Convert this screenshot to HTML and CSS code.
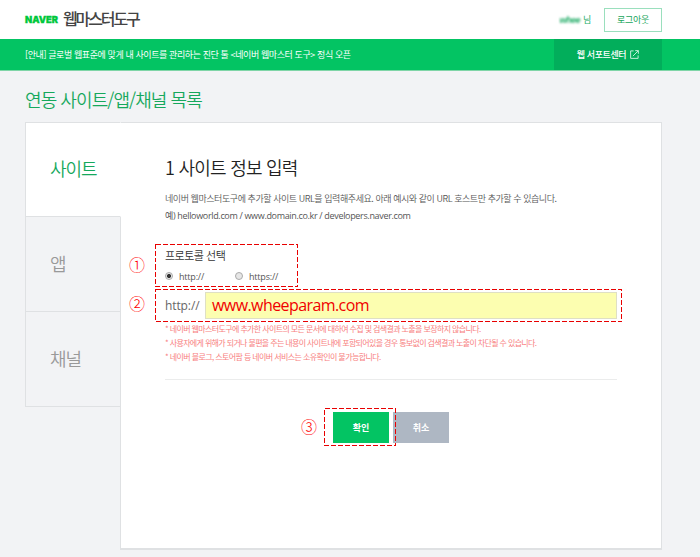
FILE: index.html
```html
<!DOCTYPE html>
<html lang="ko">
<head>
<meta charset="utf-8">
<title>네이버 웹마스터도구</title>
<link rel="stylesheet" href="styles.css">
</head>
<body>
<header class="header">
  <div class="brand"><span class="naver">NAVER</span><span class="product">웹마스터도구</span></div>
  <div class="account"><span class="user">whee</span><span class="suffix">님</span><button class="logout">로그아웃</button></div>
</header>
<div class="banner">
  <p class="notice"><span>[안내] 글로벌 웹표준에 맞게 내 사이트를 관리하는 진단 툴 &lt;네이버 웹마스터 도구&gt; 정식 오픈</span></p>
  <a class="support"><span>웹 서포트센터</span>
    <svg class="external" viewBox="0 0 10 10"><path d="M4 1H.7v8.3H9V6M5.8.7h3.5v3.5M9.2.8 3.2 6.8"/></svg>
  </a>
</div>
<main class="page">
  <h1 class="page-title"><span>연동 사이트/앱/채널 목록</span></h1>
  <div class="layout">
    <nav class="tabs">
      <a class="tab active">사이트</a>
      <a class="tab">앱</a>
      <a class="tab">채널</a>
      <div class="edge"></div>
    </nav>
    <section class="card">
      <h2 class="title"><span>1 사이트 정보 입력</span></h2>
      <p class="desc"><span class="desc-1">네이버 웹마스터도구에 추가할 사이트 URL을 입력해주세요. 아래 예시와 같이 URL 호스트만 추가할 수 있습니다.</span></p>
      <p class="desc"><span class="desc-2">예) helloworld.com / www.domain.co.kr / developers.naver.com</span></p>
      <div class="protocol">
        <h3 class="label">프로토콜 선택</h3>
        <div class="radios">
          <span class="option"><i class="radio checked"></i>http://</span>
          <span class="option"><i class="radio"></i>https://</span>
        </div>
        <svg class="outline"><rect x=".5" y=".5" width="142" height="42"/></svg>
        <span class="step">①</span>
      </div>
      <div class="url">
        <span class="scheme">http://</span>
        <div class="field">www.wheeparam.com</div>
        <svg class="outline"><rect x=".5" y=".5" width="466" height="32"/></svg>
        <span class="step">②</span>
      </div>
      <ul class="notes">
        <li><span class="note-1">* 네이버 웹마스터도구에 추가한 사이트의 모든 문서에 대하여 수집 및 검색결과 노출을 보장하지 않습니다.</span></li>
        <li><span class="note-2">* 사용자에게 위해가 되거나 불편을 주는 내용이 사이트내에 포함되어있을 경우 통보없이 검색결과 노출이 차단될 수 있습니다.</span></li>
        <li><span class="note-3">* 네이버 블로그, 스토어팜 등 네이버 서비스는 소유확인이 불가능합니다.</span></li>
      </ul>
      <div class="actions">
        <button class="btn ok">확인</button>
        <button class="btn cancel">취소</button>
        <svg class="outline"><rect x=".5" y=".5" width="71" height="37"/></svg>
        <span class="step">③</span>
      </div>
    </section>
  </div>
</main>
</body>
</html>
```
FILE: styles.css
```css
* { box-sizing: border-box; }
html, body { height: 557px; }
body {
  margin: 0;
  overflow: hidden;
  background: #f2f3f5;
  color: #333;
  font-family: "Noto Sans CJK KR", sans-serif;
  font-weight: 350;
  white-space: nowrap;
}
h1, h2, h3, p, ul { margin: 0; padding: 0; font-weight: inherit; }
li { list-style: none; }
button { padding: 0; border: 0; font: inherit; }

.header {
  display: flex;
  justify-content: space-between;
  align-items: center;
  height: 39px;
  padding: 0 38px 0 25px;
  background: #fff;
}
.brand { display: flex; align-items: center; height: 36px; }
.naver {
  width: 38px;
  color: #00c73c;
  font: 900 9.3px/35px Inter, sans-serif;
  -webkit-text-stroke: .3px #00c73c;
}
.product { color: #444; font-size: 16px; font-weight: 500; line-height: 32px; height: 36px; letter-spacing: -2.1px; }
.account { display: flex; align-items: center; height: 39px; color: #23ad68; font-size: 9px; font-weight: 400; }
.user { font: italic bold 9px "Liberation Sans", sans-serif; filter: blur(.9px); margin-right: 3px; letter-spacing: -.5px; }
.suffix { width: 21px; }
.logout {
  width: 58px;
  height: 24px;
  border: 1px solid #9adfbd;
  background: #fff;
  color: #18a65c;
  letter-spacing: -.3px;
}

.banner {
  display: flex;
  justify-content: space-between;
  height: 32px;
  padding: 0 38px 0 25px;
  background: #03c463;
  border-bottom: 1px solid #7fd5a7;
  color: #fff;
  font-size: 9px;
  font-weight: 400;
  line-height: 31px;
}
.notice { letter-spacing: -.4px; }
.support {
  display: flex;
  justify-content: center;
  align-items: center;
  gap: 4px;
  width: 108px;
  background: #02ae5b;
  font-weight: 500;
  letter-spacing: -.4px;
}
.external { width: 9px; height: 9px; fill: none; stroke: #d6f4e5; stroke-width: 1; }

.page { padding: 0 38px 0 25px; }
.page-title { height: 51px; color: #16a85c; font-size: 18px; line-height: 57px; letter-spacing: -.93px; }
.layout { display: flex; height: 428px; }
.tabs { display: flex; flex-direction: column; width: 96px; flex: none; }
.tab {
  display: block;
  height: 95px;
  padding-left: 24px;
  border: 1px solid #dfe1e3;
  border-top: 0;
  color: #999;
  font-size: 18px;
  line-height: 92px;
  letter-spacing: -1px;
}
.tab.active { background: #fff; border-top: 1px solid #dfe1e3; border-right-color: #fff; color: #16a85c; line-height: 91px; }
.edge { flex: 1; border-right: 1px solid #dfe1e3; }
.card {
  flex: 1;
  min-width: 0;
  padding: 0 44px;
  background: #fff;
  border: 1px solid #dfe1e3;
  border-width: 1px 1px 2px 0;
}
.title { height: 66px; color: #222; font-size: 18px; line-height: 88px; letter-spacing: -.75px; }
.desc { height: 17px; color: #555; font-size: 9px; line-height: 20px; }
.desc-1 { letter-spacing: -.44px; }
.desc-2 { font-family: "Open Sans", "Noto Sans CJK KR", sans-serif; letter-spacing: -.33px; font-weight: 400; }

.protocol { position: relative; width: 143px; height: 43px; margin: 21px 0 2px -10px; padding-left: 10px; }
.label { height: 22px; font-size: 11px; line-height: 23px; letter-spacing: -.5px; }
.radios { display: flex; height: 20px; align-items: center; color: #555; font: 400 9px "Open Sans", sans-serif; letter-spacing: -.2px; }
.option { display: flex; flex: none; align-items: center; gap: 6px; width: 70px; }
.radio { width: 8px; height: 8px; border: 1px solid #aaa; border-radius: 50%; background: #e6e6e6; }
.radio.checked { background: radial-gradient(circle, #333 0 1.6px, #e6e6e6 2.4px); }

.url { position: relative; display: flex; align-items: center; width: 467px; height: 33px; margin-left: -10px; padding-left: 10px; }
.scheme { width: 40px; color: #666; font: 400 12px "Open Sans", sans-serif; letter-spacing: -.1px; }
.field {
  width: 412px;
  height: 27px;
  padding-left: 6px;
  border: 1px solid #dfe0c4;
  background: #fcfeb0;
  color: #f00000;
  font: 400 16px/25px "Open Sans", sans-serif;
  letter-spacing: -.58px;
}
.outline {
  position: absolute;
  top: 0;
  left: 0;
  width: 100%;
  height: 100%;
  fill: none;
  stroke: #e80000;
  stroke-dasharray: 5 2;
  shape-rendering: crispEdges;
}
.step {
  position: absolute;
  top: calc(50% - 2px);
  left: -26px;
  width: 18px;
  color: #f00;
  font-size: 16px;
  font-weight: 300;
  line-height: 20px;
  transform: translateY(-50%);
}
.url .step { top: calc(50% - 3px); }

.notes { height: 58px; color: #f88080; border-bottom: 1px solid #ebecec; font-size: 8px; font-weight: 400; line-height: 14px; }
.note-1 { letter-spacing: -.62px; }
.note-2 { letter-spacing: -.64px; }
.note-3 { letter-spacing: -.6px; }

.actions { position: relative; display: flex; gap: 4px; width: 130px; height: 38px; margin: 28px 0 0 159px; padding: 4px 0 0 9px; }
.actions .outline { width: 72px; height: 38px; }
.actions .step { left: -23px; top: calc(50% - 1px); }
.btn { width: 56px; height: 31px; color: #fff; font-size: 9px; font-weight: 700; }
.ok { background: #03c463; }
.cancel { background: #aeb7c3; }
```
